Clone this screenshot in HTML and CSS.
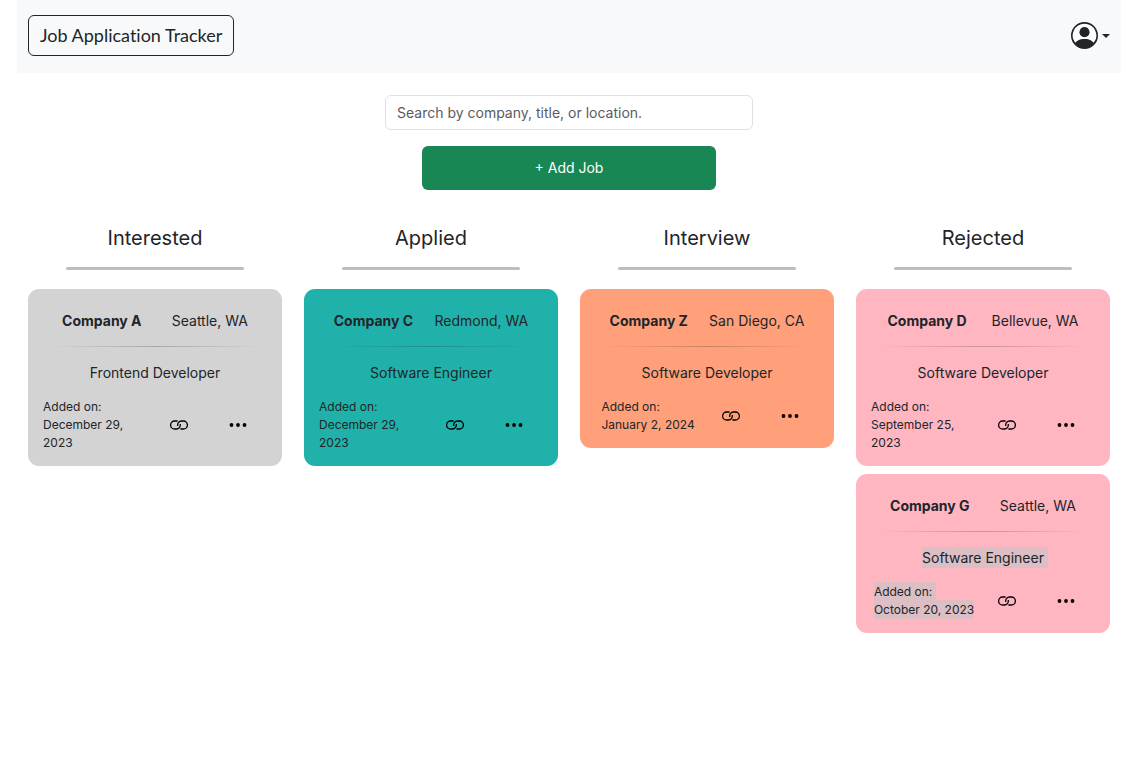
FILE: index.html
```html
<!DOCTYPE html>
<html lang="en">
<head>
<meta charset="utf-8">
<meta name="viewport" content="width=device-width, initial-scale=1">
<title>Job Application Tracker</title>
<link rel="stylesheet" href="styles.css">
</head>
<body>
<svg class="sprite" aria-hidden="true">
  <symbol id="link" viewBox="0 0 18 18"><g fill="none" stroke="currentColor" stroke-width="1.3"><path d="M7.6 5H4.6a4 4 0 0 0 0 8H6.400C9 13 10.600 11 10.300 8"/><path d="M10.400 13h3a4 4 0 0 0 0-8H11.600C9 5 7.400 7 7.700 10"/></g></symbol>
  <symbol id="dots" viewBox="0 0 18 18"><circle cx="2.5" cy="9" r="1.9"/><circle cx="9" cy="9" r="1.9"/><circle cx="15.5" cy="9" r="1.9"/></symbol>
</svg>
<header class="navbar">
  <a class="brand" href="#">Job Application Tracker</a>
  <button class="account" type="button" aria-label="Account menu">
    <svg class="avatar" viewBox="0 0 16 16"><circle cx="8" cy="8" r="7.5" fill="#fff"/><path d="M11 6a3 3 0 1 1-6 0 3 3 0 0 1 6 0"/><path fill-rule="evenodd" d="M0 8a8 8 0 1 1 16 0A8 8 0 0 1 0 8m8-7a7 7 0 0 0-5.468 11.37C3.242 11.226 4.805 10 8 10s4.757 1.225 5.468 2.37A7 7 0 0 0 8 1"/></svg>
    <span class="caret"></span>
  </button>
</header>
<main>
  <div class="tools">
    <input class="search" type="search" aria-label="Search jobs" placeholder="Search by company, title, or location.">
    <button class="add" type="button">+ Add Job</button>
  </div>
  <div class="board">
    <section class="column">
      <h2>Interested</h2>
      <hr class="rule">
      <article class="card interested">
        <div class="top"><strong>Company A</strong><span>Seattle, WA</span></div>
        <hr class="fade">
        <p class="title">Frontend Developer</p>
        <div class="bottom">
          <p class="date">Added on:<br>December 29, 2023</p>
          <a class="icon" href="#" aria-label="Job link"><svg><use href="#link"/></svg></a>
          <button class="icon" type="button" aria-label="More"><svg><use href="#dots"/></svg></button>
        </div>
      </article>
    </section>
    <section class="column">
      <h2>Applied</h2>
      <hr class="rule">
      <article class="card applied">
        <div class="top"><strong>Company C</strong><span>Redmond, WA</span></div>
        <hr class="fade">
        <p class="title">Software Engineer</p>
        <div class="bottom">
          <p class="date">Added on:<br>December 29, 2023</p>
          <a class="icon" href="#" aria-label="Job link"><svg><use href="#link"/></svg></a>
          <button class="icon" type="button" aria-label="More"><svg><use href="#dots"/></svg></button>
        </div>
      </article>
    </section>
    <section class="column">
      <h2>Interview</h2>
      <hr class="rule">
      <article class="card interview">
        <div class="top"><strong>Company Z</strong><span>San Diego, CA</span></div>
        <hr class="fade">
        <p class="title">Software Developer</p>
        <div class="bottom">
          <p class="date">Added on:<br>January 2, 2024</p>
          <a class="icon" href="#" aria-label="Job link"><svg><use href="#link"/></svg></a>
          <button class="icon" type="button" aria-label="More"><svg><use href="#dots"/></svg></button>
        </div>
      </article>
    </section>
    <section class="column">
      <h2>Rejected</h2>
      <hr class="rule">
      <article class="card rejected">
        <div class="top"><strong>Company D</strong><span>Bellevue, WA</span></div>
        <hr class="fade">
        <p class="title">Software Developer</p>
        <div class="bottom">
          <p class="date">Added on:<br>September 25, 2023</p>
          <a class="icon" href="#" aria-label="Job link"><svg><use href="#link"/></svg></a>
          <button class="icon" type="button" aria-label="More"><svg><use href="#dots"/></svg></button>
        </div>
      </article>
      <article class="card rejected">
        <div class="top"><strong>Company G</strong><span>Seattle, WA</span></div>
        <hr class="fade">
        <p class="title"><span class="selected line-end">Software Engineer</span></p>
        <div class="bottom">
          <p class="date"><span class="selected line-end">Added on:</span><br><span class="selected">October 20, 2023</span></p>
          <a class="icon" href="#" aria-label="Job link"><svg><use href="#link"/></svg></a>
          <button class="icon" type="button" aria-label="More"><svg><use href="#dots"/></svg></button>
        </div>
      </article>
    </section>
  </div>
</main>
</body>
</html>
```
FILE: styles.css
```css
* { box-sizing: border-box; }
body {
  margin: 0;
  padding: 0 18px 0 17px;
  background: #fff;
  color: #212529;
  font: 14px/22px Inter, "Liberation Sans", sans-serif;
}
p, h2, hr { margin: 0; }
button { font: inherit; color: inherit; border: 0; background: none; padding: 0; cursor: pointer; }
.sprite { display: none; }

.navbar {
  display: flex;
  justify-content: space-between;
  align-items: center;
  padding: 15px 11px 17px;
  background: #f8f9fb;
}
.brand {
  padding: 7px 11px;
  border: 1px solid #212529;
  border-radius: 6px;
  color: inherit;
  font: 18px/25px Lato, sans-serif;
  font-variant-ligatures: none;
  text-decoration: none;
}
.account { display: flex; align-items: center; gap: 4px; }
.avatar { width: 27px; height: 27px; fill: #212529; }
.caret { border: 4px solid transparent; border-top-color: #212529; border-bottom: 0; }

.tools {
  display: flex;
  flex-direction: column;
  align-items: center;
  gap: 16px;
  width: 33.333%;
  margin: 22px auto 0;
}
.search {
  width: 100%;
  height: 35px;
  padding: 0 11px;
  border: 1px solid #dee2e6;
  border-radius: 6px;
  background: #fff;
  color: inherit;
  font: inherit;
  appearance: none;
}
.search::placeholder { color: #595c5f; opacity: 1; }
.add { width: 80%; padding: 11px; border-radius: 6px; background: #198754; color: #fff; }

.board { display: grid; grid-template-columns: repeat(4, 1fr); margin-top: 32px; }
.column { display: flex; flex-direction: column; gap: 8px; padding: 0 11px; }
h2 { font-size: 20px; line-height: 32px; font-weight: 400; text-align: center; }
.rule {
  width: 70%;
  height: 3px;
  margin: 5px auto 11px;
  border: 0;
  border-radius: 2px;
  background: #bdbdbd;
}
.card { padding: 21px 0 14px; border-radius: 11px; }
.interested { background: #d3d3d3; }
.applied { background: #20b2aa; }
.interview { background: #ffa07a; }
.rejected { background: #ffb6c1; }
.top { display: flex; justify-content: space-around; padding: 0 19px; }
.top strong { font-weight: 700; }
.fade {
  height: 1px;
  margin: 14px 22px 15px;
  border: 0;
  background: linear-gradient(to right, transparent, rgba(33, 37, 41, 0.25), transparent);
}
.title { text-align: center; }
.bottom {
  display: grid;
  grid-template-columns: 9fr 5fr 5fr;
  align-items: center;
  justify-items: center;
  margin-top: 14px;
  padding: 0 15px;
}
.date { font-size: 12px; line-height: 18px; }
.icon { display: flex; color: #000; }
.icon svg { width: 18px; height: 18px; fill: currentColor; }
.selected { padding-top: 2px; padding-bottom: 2px; background: #dbbfc4; }
.line-end { padding-right: 4px; margin-right: -4px; }
```
